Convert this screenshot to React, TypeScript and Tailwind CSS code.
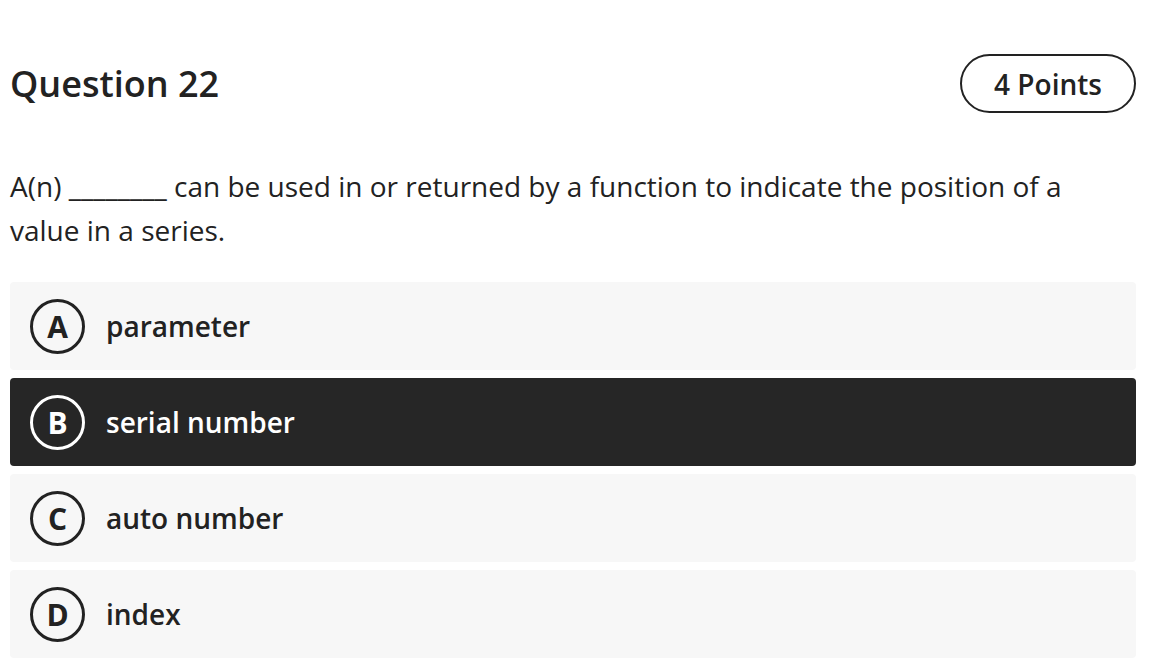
import React from "react";

const options = [
  { letter: "A", text: "parameter", selected: false },
  { letter: "B", text: "serial number", selected: true },
  { letter: "C", text: "auto number", selected: false },
  { letter: "D", text: "index", selected: false },
];

export default function App() {
  return (
    <div
      className="w-[1160px] h-[670px] bg-white text-[#222222] pl-[10px] pr-[24px] pt-[54px] overflow-hidden"
      style={{ fontFamily: '"Open Sans", "Noto Sans", sans-serif' }}
    >
      <div className="flex items-center justify-between h-[59px]">
        <h1 className="text-[36px] font-semibold leading-none">Question 22</h1>
        <div className="w-[176px] h-[59px] rounded-full border-2 border-[#222222] flex items-center justify-center text-[28px] font-semibold">
          4 Points
        </div>
      </div>
      <p className="mt-[51px] text-[28px] leading-[44px] font-normal">
        A(n) ________ can be used in or returned by a function to indicate the position of a value in a series.
      </p>
      <div className="mt-[30px] flex flex-col gap-2">
        {options.map((o) => (
          <div
            key={o.letter}
            className={
              o.selected
                ? "h-[88px] rounded-[4px] bg-[#262626] text-white flex items-center pl-[20px]"
                : "h-[88px] rounded-[4px] bg-[#f7f7f7] text-[#222222] flex items-center pl-[20px]"
            }
          >
            <div
              className={
                o.selected
                  ? "w-[55px] h-[55px] rounded-full border-[3px] border-white flex items-center justify-center text-[30px] font-bold"
                  : "w-[55px] h-[55px] rounded-full border-[3px] border-[#222222] flex items-center justify-center text-[30px] font-bold"
              }
            >
              {o.letter}
            </div>
            <span className="ml-[21px] text-[28px] font-semibold">{o.text}</span>
          </div>
        ))}
      </div>
    </div>
  );
}
